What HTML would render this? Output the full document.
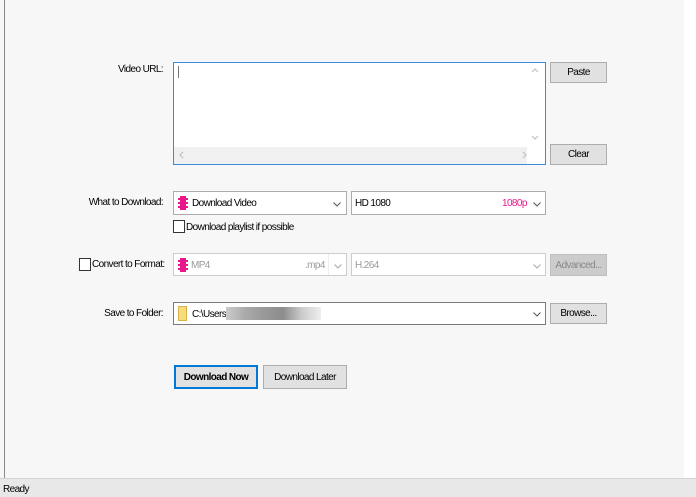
<!DOCTYPE html><html><head><style>
body{margin:0;width:696px;height:497px;background:#fff;font-family:"Liberation Sans",sans-serif;font-size:10px;color:#000;position:relative;overflow:hidden;letter-spacing:-0.6px}
.main{position:absolute;left:0;top:0;width:684px;height:478px;background:#f7f7f7}
.vl{position:absolute;left:4px;top:0;width:1px;height:478px;background:#8a8a8a}
.a{position:absolute;white-space:nowrap}
.lbl{position:absolute;text-align:right;width:160px;left:3px}
.btn{position:absolute;background:#e1e1e1;border:1px solid #adadad;box-sizing:border-box;text-align:center}
.cb{position:absolute;background:#fff;border:1px solid #acacac;box-sizing:border-box}
.chk{position:absolute;width:12px;height:13px;border:1px solid #333;background:#fff;box-sizing:border-box}
.film{position:absolute;width:10px;height:14px;background:#e8178a;border-left:2px dotted #fff;border-right:2px dotted #fff;box-sizing:border-box}
.dd{position:absolute;width:8px;height:5px}
.status{position:absolute;left:0;top:478px;width:696px;height:19px;background:#e8e8e8;border-top:1px solid #d4d4d4;box-sizing:border-box}
</style></head><body>
<div class="main"></div><div class="vl"></div>
<div class="lbl" style="top:64px">Video URL:</div>
<div class="a" style="left:173px;top:62px;width:373px;height:103px;border:1px solid #3a8ad6;box-sizing:border-box;background:#fff">
 <div class="a" style="left:4px;top:3px;width:1px;height:12px;background:#777"></div>
 <div class="a" style="left:0;top:84px;width:353px;height:17px;background:#f0f0f0"></div>
 <svg class="a" style="left:357px;top:5px" width="8" height="5"><path d="M1 4L4 1L7 4" stroke="#bbb" fill="none"/></svg>
 <svg class="a" style="left:357px;top:72px" width="8" height="5"><path d="M1 1L4 4L7 1" stroke="#bbb" fill="none"/></svg>
 <svg class="a" style="left:5px;top:88px" width="5" height="8"><path d="M4 1L1 4L4 7" stroke="#bbb" fill="none"/></svg>
 <svg class="a" style="left:348px;top:88px" width="5" height="8"><path d="M1 1L4 4L1 7" stroke="#bbb" fill="none"/></svg>
</div>
<div class="btn" style="left:550px;top:62px;width:57px;height:21px;line-height:20px">Paste</div>
<div class="btn" style="left:550px;top:144px;width:57px;height:21px;line-height:20px">Clear</div>

<div class="lbl" style="top:197px">What to Download:</div>
<div class="cb" style="left:173px;top:191px;width:174px;height:24px"><div class="film" style="left:4px;top:4px"></div><div class="a" style="left:18px;top:6px">Download Video</div><svg class="dd" style="left:159px;top:10px"><path d="M0.5 0.5L4 4L7.5 0.5" stroke="#555" fill="none"/></svg></div>
<div class="cb" style="left:351px;top:191px;width:195px;height:24px"><div class="a" style="left:3px;top:6px">HD 1080</div><div class="a" style="left:150px;top:6px;color:#e8178a">1080p</div><svg class="dd" style="left:181px;top:10px"><path d="M0.5 0.5L4 4L7.5 0.5" stroke="#555" fill="none"/></svg></div>
<div class="chk" style="left:173px;top:220px"></div><div class="a" style="left:186px;top:222px">Download playlist if possible</div>

<div class="chk" style="left:79px;top:258px"></div><div class="a" style="left:92px;top:259px">Convert to Format:</div>
<div class="cb" style="left:173px;top:253px;width:174px;height:23px;border-color:#ccc"><div class="film" style="left:4px;top:4px"></div><div class="a" style="left:17px;top:6px;color:#999">MP4</div><div class="a" style="left:131px;top:6px;color:#999">.mp4</div><div class="a" style="left:154px;top:0;width:1px;height:21px;background:#eee"></div><svg class="dd" style="left:160px;top:10px"><path d="M0.5 0.5L4 4L7.5 0.5" stroke="#aaa" fill="none"/></svg></div>
<div class="cb" style="left:351px;top:253px;width:195px;height:23px;border-color:#ccc"><div class="a" style="left:3px;top:6px;color:#999">H.264</div><svg class="dd" style="left:181px;top:10px"><path d="M0.5 0.5L4 4L7.5 0.5" stroke="#aaa" fill="none"/></svg></div>
<div class="btn" style="left:550px;top:254px;width:57px;height:22px;line-height:21px;background:#ccc;border-color:#bfbfbf;color:#888">Advanced...</div>

<div class="lbl" style="top:308px">Save to Folder:</div>
<div class="cb" style="left:173px;top:302px;width:373px;height:23px;border-color:#7a7a7a"><div class="a" style="left:4px;top:3px;width:9px;height:15px;background:#f8dc7c;border:1px solid #d6b24a;box-sizing:border-box"></div><div class="a" style="left:18px;top:6px">C:\Users\</div>
<div class="a" style="left:52px;top:4px;width:95px;height:13px;background:linear-gradient(90deg,#ccc,#aaa 20%,#999 40%,#8d8d8d 60%,#ccc 80%,#eee)"></div><svg class="dd" style="left:359px;top:9px"><path d="M0.5 0.5L4 4L7.5 0.5" stroke="#555" fill="none"/></svg></div>
<div class="btn" style="left:550px;top:303px;width:57px;height:21px;line-height:20px">Browse...</div>

<div class="btn" style="left:174px;top:365px;width:84px;height:24px;line-height:22px;border:2px solid #0078d7;font-weight:bold">Download Now</div>
<div class="btn" style="left:263px;top:365px;width:84px;height:24px;line-height:23px">Download Later</div>

<div class="status"><div class="a" style="left:3px;top:5px">Ready</div></div>
</body></html>
